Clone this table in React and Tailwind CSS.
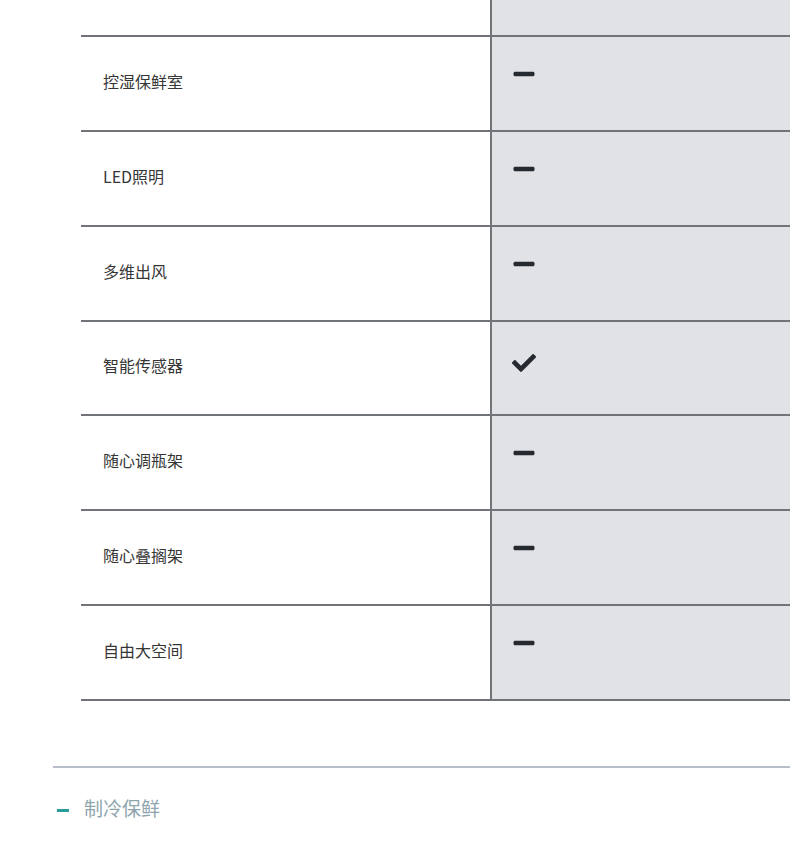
import React from "react";
import { FaMinus, FaCheck } from "react-icons/fa";

const rows = [
  { label: "控湿保鲜室", ok: false, h: "h-[93px]" },
  { label: "LED照明", ok: false, h: "h-[93px]" },
  { label: "多维出风", ok: false, h: "h-[93px]" },
  { label: "智能传感器", ok: true, h: "h-[92px]" },
  { label: "随心调瓶架", ok: false, h: "h-[93px]" },
  { label: "随心叠搁架", ok: false, h: "h-[93px]" },
  { label: "自由大空间", ok: false, h: "h-[93px]" },
];

export default function App() {
  return (
    <div
      className="w-[790px] h-[859px] bg-white overflow-hidden"
      style={{ fontFamily: '"Noto Sans CJK SC", "Noto Sans", sans-serif' }}
    >
      <div className="ml-[81px]">
        <div className="flex h-[37px] border-b-2 border-[#707377]">
          <div className="w-[409px] bg-white" />
          <div className="flex-1 bg-[#e1e2e6] border-l-2 border-[#707377]" />
        </div>
        {rows.map((r) => (
          <div key={r.label} className="flex border-b-2 border-[#707377]">
            <div className={`w-[409px] ${r.h} flex items-center pl-[22px] pb-[6px] bg-white`}>
              <span className="text-[16px] leading-6 text-[#363636]">{r.label}</span>
            </div>
            <div className={`flex-1 ${r.h} bg-[#e1e2e6] border-l-2 border-[#707377] pl-[20px] pt-[25px]`}>
              {r.ok ? (
                <FaCheck size={24} className="text-[#252a31] mt-[4px]" />
              ) : (
                <FaMinus size={24} className="text-[#252a31]" />
              )}
            </div>
          </div>
        ))}
      </div>
      <div className="mt-[65px] ml-[53px] border-t-2 border-[#b7beca] pt-[26px] flex items-center">
        <div className="ml-[4px] w-[12px] h-[3px] bg-[#2a9d9a] mt-[4px]" />
        <span className="ml-[15px] text-[19px] leading-7 text-[#8ea5ae]">制冷保鲜</span>
      </div>
    </div>
  );
}
